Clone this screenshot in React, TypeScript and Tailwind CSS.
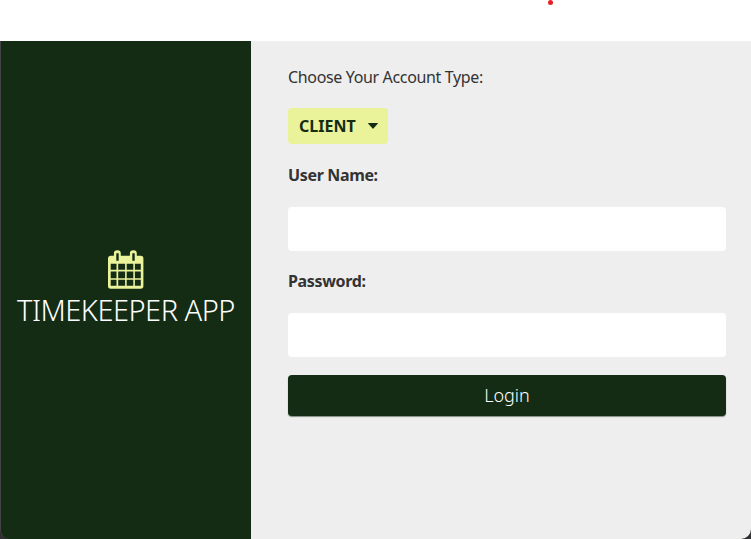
import type { ReactNode } from "react";

function CalendarIcon() {
  return (
    <svg width="36" height="39" viewBox="0 0 36 39" className="block" aria-hidden="true">
      <path
        fill="#eaf29a"
        fillRule="evenodd"
        d="M2.5 5.7H5.9V3.4A3.2 3.2 0 0 1 9.1.2h.5a3.2 3.2 0 0 1 3.2 3.2v2.3h9.1V3.4A3.2 3.2 0 0 1 25.1.2h.5a3.2 3.2 0 0 1 3.2 3.2v2.3h4a2.6 2.6 0 0 1 2.6 2.6v27.8a2.6 2.6 0 0 1-2.6 2.6H2.6A2.6 2.6 0 0 1 0 36.1V8.3A2.6 2.6 0 0 1 2.5 5.7zM8.3 3.2v7.6h2.4V3.2zM24.3 3.2v7.6h2.4V3.2zM2.7 13.8v6h5.8v-6zM10.2 13.8v6h6.9v-6zM18.7 13.8v6h6.6v-6zM26.9 13.8v6h5.9v-6zM2.7 21.5v6.7h5.8v-6.7zM10.2 21.5v6.7h6.9v-6.7zM18.7 21.5v6.7h6.6v-6.7zM26.9 21.5v6.7h5.9v-6.7zM2.7 29.8v6h5.8v-6zM10.2 29.8v6h6.9v-6zM18.7 29.8v6h6.6v-6zM26.9 29.8v6h5.9v-6z"
      />
    </svg>
  );
}

function Field({ label, type, children }: { label: ReactNode; type: string; children?: ReactNode }) {
  return (
    <label className="block h-[106px]">
      <span className="block h-[44px] text-base leading-6 font-bold tracking-[-0.35px] text-[#333]">{label}</span>
      <input type={type} className="block h-11 w-full rounded bg-white px-3 outline-none" />
      {children}
    </label>
  );
}

export default function App() {
  return (
    <div className="flex h-[539px] w-[751px] flex-col overflow-hidden bg-white font-['Noto_Sans','Open_Sans',sans-serif]">
      <header className="relative h-[41px] shrink-0">
        <span className="absolute top-0 left-[548px] size-[5px] rounded-full bg-[#e6202a]" />
      </header>
      <div className="flex h-[498px] bg-[#303033]">
        <main className="flex w-full overflow-hidden rounded-b-[10px] border-l border-[#444347] bg-[#142b14]">
          <aside className="flex w-[250px] shrink-0 flex-col items-center bg-[#142b14] pt-[209px]">
            <CalendarIcon />
            <h1 className="mt-[1px] text-[29px] leading-[40px] font-light tracking-[-0.5px] whitespace-nowrap text-white">
              TIMEKEEPER APP
            </h1>
          </aside>
          <form className="flex-1 bg-[#eee] pt-6 pr-[25px] pl-[37px]" onSubmit={(e) => e.preventDefault()}>
            <p className="text-base leading-6 tracking-[-0.35px] text-[#333]">Choose Your Account Type:</p>
            <button
              type="button"
              className="mt-[19px] mb-[19px] flex h-9 w-[100px] items-center rounded bg-[#eaf29a] pl-[11px] text-base font-bold text-[#142b14]"
            >
              <span className="w-[69px] text-left">CLIENT</span>
              <svg width="10" height="6" viewBox="0 0 10 6" aria-hidden="true">
                <path d="M.5 0h9q.5.2.2.7L5.4 5.6q-.4.4-.8 0L.3.7Q0 .2.5 0z" fill="#142b14" />
              </svg>
            </button>
            <Field label="User Name:" type="text" />
            <Field label="Password:" type="password" />
            <button
              type="submit"
              className="block h-[41px] w-full rounded bg-[#142b14] pb-px text-[18px] leading-6 font-light text-white shadow-[0_1px_1px_rgba(20,43,20,0.5)]"
            >
              Login
            </button>
          </form>
        </main>
      </div>
    </div>
  );
}
